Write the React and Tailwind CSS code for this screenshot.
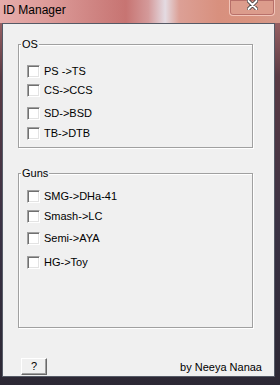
import React from 'react';

const osItems = [
  { label: 'PS ->TS', mt: 'mt-0' },
  { label: 'CS->CCS', mt: 'mt-[6px]' },
  { label: 'SD->BSD', mt: 'mt-[10px]' },
  { label: 'TB->DTB', mt: 'mt-[7px]' },
];

const gunItems = [
  { label: 'SMG->DHa-41', mt: 'mt-0' },
  { label: 'Smash->LC', mt: 'mt-[7px]' },
  { label: 'Semi->AYA', mt: 'mt-[9px]' },
  { label: 'HG->Toy', mt: 'mt-[11px]' },
];

const CheckRow = ({ label, mt }) => (
  <label className={`flex items-center h-[13px] ${mt}`}>
    <span className="w-[13px] h-[13px] border border-t-[#a0a0a0] border-l-[#a0a0a0] border-b-white border-r-white bg-white shadow-[inset_1px_1px_0_#707070,inset_-1px_-1px_0_#e3e3e3] shrink-0" />
    <span className="ml-[4px] leading-[13px] text-black">{label}</span>
  </label>
);

const GroupBox = ({ title, items, height, pt, className = '' }) => (
  <div
    className={`relative ml-[15px] w-[235px] border border-[#a0a0a0] shadow-[1px_1px_0_#fff,inset_1px_1px_0_#fff] pl-[8px] ${pt} ${height} ${className}`}
  >
    <span className="absolute -top-[7px] left-[2px] px-[1px] bg-[#f0f0f0] leading-[13px] text-black">
      {title}
    </span>
    {items.map((it) => (
      <CheckRow key={it.label} label={it.label} mt={it.mt} />
    ))}
  </div>
);

export default function App() {
  return (
    <div
      className="w-[280px] h-[385px] flex flex-col bg-[linear-gradient(180deg,#b07070_0%,#5a3a44_20%,#3a3244_60%,#2c2834_100%)] text-[11px]"
      style={{ fontFamily: '"Liberation Sans", Arial, sans-serif' }}
    >
      {/* title bar */}
      <div className="h-[23px] flex items-start justify-between bg-[linear-gradient(90deg,#e6acaa_0%,#dc9a98_18%,#d08684_32%,#c77472_45%,#d49a9a_53%,#e4dbe2_59%,#dca096_64%,#d8907e_78%,#d9937f_90%,#d49a8c_100%)]">
        <span className="pl-[3px] pt-[3px] text-[12px] leading-[14px] text-black">ID Manager</span>
        <div className="mr-[5px] w-[46px] h-[16px] rounded-b-[4px] border border-t-0 border-[#f2c4b8] shadow-[inset_0_0_0_1px_#b8706a] bg-[#dc9c8c] flex justify-center">
          <svg width="11" height="10" viewBox="0 0 11 10" className="mt-[0px]">
            <path d="M1.5 1 L9.5 9 M9.5 1 L1.5 9" stroke="#3a3a3a" strokeWidth="3.6" strokeLinecap="round" />
            <path d="M1.5 1 L9.5 9 M9.5 1 L1.5 9" stroke="#ffffff" strokeWidth="2" strokeLinecap="round" />
          </svg>
        </div>
      </div>

      {/* client area */}
      <div className="ml-[2px] w-[273px] h-[354px] border border-[#555a66] bg-[#f0f0f0] flex flex-col pt-[20px]">
        <GroupBox title="OS" items={osItems} height="h-[104px]" pt="pt-[20px]" />
        <GroupBox title="Guns" items={gunItems} height="h-[155px]" pt="pt-[16px]" className="mt-[25px]" />

        <div className="mt-[30px] flex items-center justify-between pl-[18px] pr-[12px]">
          <button className="w-[26px] h-[17px] bg-[#f0f0f0] border border-t-white border-l-white border-b-[#696969] border-r-[#696969] shadow-[inset_-1px_-1px_0_#a0a0a0] text-black text-[11px] leading-[13px] flex items-center justify-center">
            ?
          </button>
          <span className="text-black leading-[13px] mt-[1px]">by Neeya Nanaa</span>
        </div>
      </div>
    </div>
  );
}
